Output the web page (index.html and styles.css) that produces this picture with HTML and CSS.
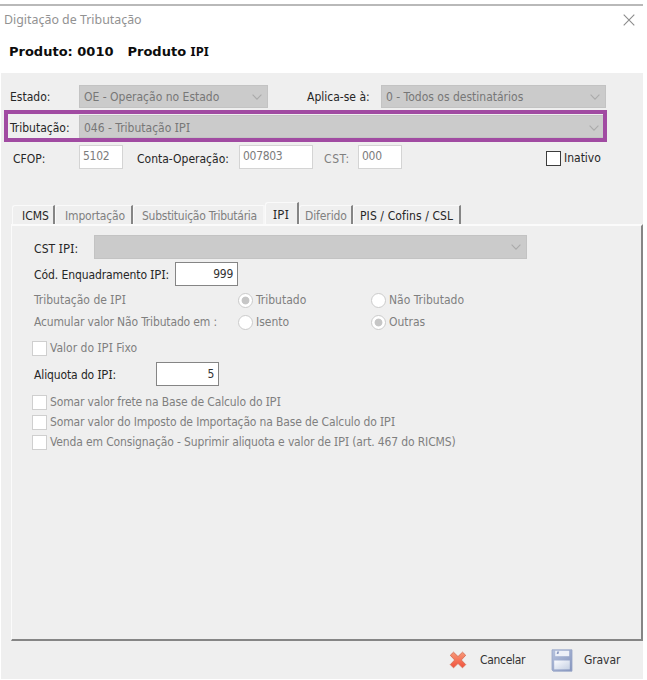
FILE: index.html
```html
<!DOCTYPE html>
<html lang="pt-BR">
<head>
<meta charset="utf-8">
<title>Digitação de Tributação</title>
<link rel="stylesheet" href="styles.css">
</head>
<body>
<div class="window">
  <header class="titlebar">
    <span class="title">Digitação de Tributação</span>
    <svg class="close" viewBox="0 0 12 12"><path d="M.7.7l10.6 10.6M11.3.7L.7 11.3"/></svg>
  </header>
  <div class="product"><span>Produto: 0010</span><span>Produto <span class="serif-i">IPI</span></span></div>

  <main class="panel">
    <div class="row row-state">
      <label class="state-label">Estado:</label>
      <div class="combo combo-state"><span>OE - Operação no Estado</span><svg class="chevron" viewBox="0 0 10 6"><path d="M.6.7L5 5.1 9.4.7"/></svg></div>
      <label class="applies-label">Aplica-se à:</label>
      <div class="combo combo-applies"><span>0 - Todos os destinatários</span><svg class="chevron" viewBox="0 0 10 6"><path d="M.6.7L5 5.1 9.4.7"/></svg></div>
    </div>

    <div class="highlight">
      <label class="tax-label">Tributação:</label>
      <div class="combo combo-tax"><span>046 - Tributação <span class="serif-i">IPI</span></span><svg class="chevron" viewBox="0 0 10 6"><path d="M.6.7L5 5.1 9.4.7"/></svg></div>
    </div>

    <div class="row row-codes">
      <label class="cfop-label">CFOP:</label>
      <div class="field field-small">5102</div>
      <label class="account-label">Conta-Operação:</label>
      <div class="field field-account">007803</div>
      <label class="cst-label muted">CST:</label>
      <div class="field field-small">000</div>
      <div class="check inactive"><i class="box box-on"></i><span>Inativo</span></div>
    </div>

    <nav class="tabs">
      <div class="tab tab-icms">ICMS</div>
      <div class="tab tab-import muted">Importação</div>
      <div class="tab tab-subst muted">Substituição Tributária</div>
      <div class="tab tab-ipi"><span class="serif-i">IPI</span></div>
      <div class="tab tab-deferred muted">Diferido</div>
      <div class="tab tab-pis">PIS / Cofins / CSL</div>
    </nav>

    <section class="page">
      <div class="row row-cst">
        <label class="cst-ipi-label">CST <span class="serif-i">IPI</span>:</label>
        <div class="combo combo-cst"><span></span><svg class="chevron" viewBox="0 0 10 6"><path d="M.6.7L5 5.1 9.4.7"/></svg></div>
      </div>
      <div class="row row-code">
        <label class="code-label">Cód. Enquadramento <span class="serif-i">IPI</span>:</label>
        <div class="field number">999</div>
      </div>
      <div class="options muted">
        <span class="opt-1">Tributação de <span class="serif-i">IPI</span></span>
        <div class="radio"><i class="dot dot-on"></i><span>Tributado</span></div>
        <div class="radio"><i class="dot"></i><span>Não Tributado</span></div>
        <span class="opt-2">Acumular valor Não Tributado em :</span>
        <div class="radio"><i class="dot"></i><span>Isento</span></div>
        <div class="radio"><i class="dot dot-on"></i><span>Outras</span></div>
      </div>
      <div class="check fixed-value muted"><i class="box"></i><span>Valor do <span class="serif-i">IPI</span> Fixo</span></div>
      <div class="row row-rate">
        <label class="rate-label">Aliquota do <span class="serif-i">IPI</span>:</label>
        <div class="field number">5</div>
      </div>
      <div class="checks muted">
        <div class="check"><i class="box"></i><span>Somar valor frete na Base de Calculo do <span class="serif-i">IPI</span></span></div>
        <div class="check"><i class="box"></i><span>Somar valor do Imposto de Importação na Base de Calculo do <span class="serif-i">IPI</span></span></div>
        <div class="check"><i class="box"></i><span>Venda em Consignação - Suprimir aliquota e valor de <span class="serif-i">IPI</span> (art. 467 do RICMS)</span></div>
      </div>
    </section>

    <footer class="actions">
      <div class="action cancel">
        <svg width="18" height="18" viewBox="0 0 18 18">
          <defs><linearGradient id="red" x1="0" y1="0" x2="0" y2="1"><stop offset="0" stop-color="#f79a78"/><stop offset="1" stop-color="#f2503c"/></linearGradient></defs>
          <path d="M4.5 1.2L9 5.6l4.5-4.4 3.2 3.1L12.3 9l4.4 4.6-3.2 3.2L9 12.4l-4.5 4.4-3.2-3.2L5.7 9 1.3 4.3z" fill="url(#red)" stroke="#d9735c" stroke-linejoin="round"/>
        </svg>
        <span>Cancelar</span>
      </div>
      <div class="action save">
        <svg width="22" height="23" viewBox="0 0 22 23">
          <defs><linearGradient id="blue" x1="0" y1="0" x2="1" y2="1"><stop offset="0" stop-color="#b7c3de"/><stop offset="1" stop-color="#8494bd"/></linearGradient>
          <linearGradient id="paper" x1="0" y1="0" x2="1" y2="1"><stop offset="0" stop-color="#fbfcff"/><stop offset="1" stop-color="#c5d0e3"/></linearGradient></defs>
          <path d="M1 .8h20v21.4H2.2L1 21z" fill="url(#blue)" stroke="#97a4c6" stroke-width=".8"/>
          <path d="M4.2 1.8h14v5.4h-14z" fill="#eef1f8"/>
          <path d="M6.2 2.6L8.2 2.4 7.4 5H5.7z" fill="#8b99c0"/>
          <path d="M3.2 11.5h15.6v8.9H3.2z" fill="url(#paper)"/>
        </svg>
        <span>Gravar</span>
      </div>
    </footer>
  </main>
</div>
</body>
</html>
```
FILE: styles.css
```css
* { box-sizing: border-box; }

body {
  margin: 0;
  width: 647px;
  height: 680px;
  overflow: hidden;
  background: #fff;
  color: #262626;
  font: 12px/16px "DejaVu Sans Condensed", "DejaVu Sans", sans-serif;
  font-stretch: condensed;
  white-space: nowrap;
}

.serif-i { font-family: "Noto Sans", sans-serif; font-stretch: normal; line-height: 1; }

.window {
  width: 643px;
  margin-top: 4px;
  border-top: 2px solid #b9b9b9;
}

.titlebar {
  display: flex;
  justify-content: space-between;
  align-items: center;
  height: 27px;
  padding: 0 8px 0 4px;
}
.title { font: 12.4px/16px "Noto Sans", sans-serif; color: #929292; }
.close { width: 12px; height: 12px; fill: none; stroke: #8c8c8c; stroke-width: 1.1; }

.product {
  display: flex;
  gap: 14px;
  height: 40px;
  padding: 10px 0 0 9px;
  font: bold 13px/18px "DejaVu Sans", sans-serif;
  color: #0c0c0c;
}

.panel {
  height: 606px;
  margin-left: 1px;
  padding-top: 12px;
  background: #efefef;
}

.row { display: flex; align-items: center; height: 24px; }
label { flex: none; }
.muted { color: #7f7f7f; }

.combo {
  display: flex;
  justify-content: space-between;
  align-items: center;
  height: 23px;
  padding: 0 5px 0 4px;
  border: 1px solid #c3c3c3;
  background: #cbcbcb;
  color: #777;
}
.chevron { width: 10px; height: 6px; fill: none; stroke: #aaa; stroke-width: 1.1; }

.field {
  height: 24px;
  padding: 2px 0 0 3px;
  border: 1px solid #d4d4d4;
  background: #fff;
  color: #7c7c7c;
  letter-spacing: -.3px;
}
.number {
  width: 63px;
  height: 24px;
  padding: 3px 4px 0 0;
  border-color: #858585;
  color: #333;
  text-align: right;
}

.row-state { padding-left: 9px; height: 23px; }
.state-label { width: 69px; }
.combo-state { width: 189px; }
.applies-label { width: 74px; margin-left: 39px; }
.combo-applies { width: 225px; }

.highlight {
  display: flex;
  align-items: center;
  width: 603px;
  height: 32px;
  margin: 2px 0 0 3px;
  padding: 1px 0 0 2px;
  border: 4px solid #a14ba2;
}
.tax-label { width: 69px; padding-top: 2px; }
.combo-tax { flex: 1; padding: 2px 4px 0 4px; border-right: 0; }

.row-codes { margin-top: 2px; padding-left: 12px; height: 25px; }
.row-codes label { padding-top: 4px; }
.cfop-label { width: 66px; }
.field-small { width: 44px; }
.account-label { width: 102px; margin-left: 14px; }
.field-account { width: 74px; }
.cst-label { width: 34px; margin-left: 11px; letter-spacing: .6px; }

.check { display: flex; align-items: center; gap: 3px; height: 20px; }
.box { width: 15px; height: 15px; border: 1px solid #cfcfcf; background: #fff; }
.box-on { border-color: #3c3c3c; }
.inactive { margin: 3px 0 0 144px; }

.tabs { display: flex; align-items: flex-end; height: 22px; margin: 33px 0 0 11px; }
.tab {
  height: 19px;
  padding: 2px 0 0 9px;
  border-top: 1px solid #fafafa;
  border-left: 1px solid #fafafa;
  border-right: 2px solid #858585;
  border-radius: 3px 0 0 0;
}
.tab-icms { width: 43px; }
.tab-import { width: 78px; letter-spacing: -.16px; }
.tab-subst { width: 132px; padding-left: 8px; letter-spacing: -.26px; border-right-color: #f6f6f6; }
.tab-ipi { width: 34px; height: 22px; padding: 4px 0 0 7px; letter-spacing: .2px; }
.tab-deferred { width: 54px; padding-left: 5px; letter-spacing: -.1px; }
.tab-pis { width: 108px; padding-left: 6px; letter-spacing: .1px; }

.page {
  width: 632px;
  height: 417px;
  margin-left: 10px;
  padding: 9px 0 0 22px;
  border: solid;
  border-width: 2px 2px 2px 1px;
  border-color: #fbfbfb #858585 #858585 #fbfbfb;
}
.row-cst { height: 24px; }
.cst-ipi-label { width: 60px; padding-top: 3px; letter-spacing: .1px; }
.combo-cst { width: 433px; height: 24px; }
.row-code { margin-top: 3px; }
.code-label { width: 141px; padding-top: 2px; letter-spacing: -.09px; }

.options {
  display: grid;
  grid-template-columns: 204px 133px auto;
  grid-template-rows: 22px 22px;
  align-items: center;
  margin-top: 3px;
}
.opt-2 { letter-spacing: -.15px; }
.radio { display: flex; align-items: center; gap: 3px; }
.dot { width: 15px; height: 15px; border: 1px solid #cbcbcb; border-radius: 50%; background: #fff; }
.dot-on { background: radial-gradient(circle, #c6c6c6 3.5px, #fff 4.3px); }

.fixed-value { margin: 5px 0 0 -2px; }
.row-rate { margin-top: 4px; }
.rate-label { width: 122px; padding-top: 2px; letter-spacing: -.12px; }
.checks { margin: 6px 0 0 -2px; letter-spacing: -.14px; }

.actions { display: flex; height: 38px; padding-left: 448px; align-items: center; color: #333; }
.action { display: flex; align-items: center; }
.cancel { width: 102px; gap: 13px; letter-spacing: -.3px; }
.save { gap: 11px; letter-spacing: -.1px; }
```
